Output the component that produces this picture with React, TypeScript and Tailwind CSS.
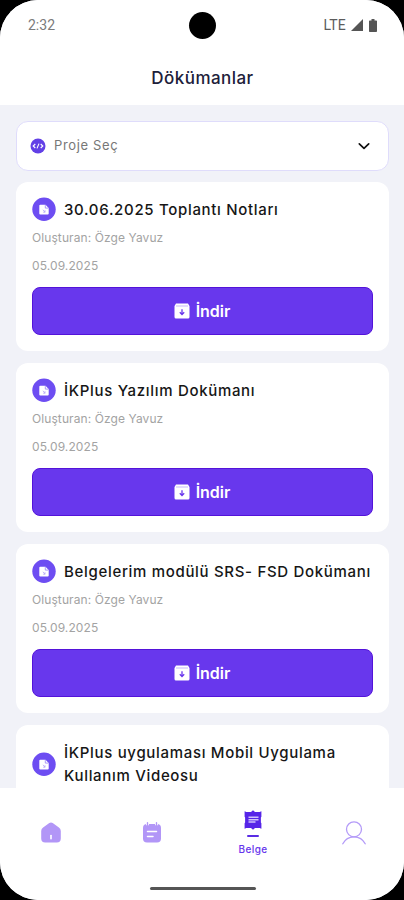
const documents = [
  { id: 1, title: '30.06.2025 Toplantı Notları', author: 'Özge Yavuz', date: '05.09.2025' },
  { id: 2, title: 'İKPlus Yazılım Dokümanı', author: 'Özge Yavuz', date: '05.09.2025' },
  { id: 3, title: 'Belgelerim modülü SRS- FSD Dokümanı', author: 'Özge Yavuz', date: '05.09.2025' },
  { id: 4, title: 'İKPlus uygulaması Mobil Uygulama Kullanım Videosu' },
]

type Doc = { id: number; title: string; author?: string; date?: string }

function StatusBar() {
  return (
    <div className="relative flex h-[50px] items-center justify-between pl-[28px] pr-[27px] font-[Roboto,sans-serif]">
      <span className="text-[14px] text-[#7b7b7b]">2:32</span>
      <div className="absolute left-[189px] top-[12px] size-[27px] rounded-full bg-black" />
      <div className="flex items-center">
        <span className="text-[14px] tracking-[0.2px] text-[#5c5c5c]">LTE</span>
        <svg className="ml-[5px]" width="12" height="12" viewBox="0 0 12 12" fill="#555">
          <path d="M12 0v12H0z" />
        </svg>
        <svg className="ml-[6px]" width="8" height="13" viewBox="0 0 8 13" fill="#555">
          <path d="M2.5 0h3v1.4H7c.6 0 1 .4 1 1V12c0 .6-.4 1-1 1H1c-.6 0-1-.4-1-1V2.4c0-.6.4-1 1-1h1.5z" />
        </svg>
      </div>
    </div>
  )
}

function DocIcon() {
  return (
    <svg className="shrink-0" width="24" height="24" viewBox="0 0 24 24" fill="none">
      <circle cx="12" cy="12.3" r="11.7" fill="#6d4df2" />
      <path d="M8.300 7.700h5.200l3.200 3.200v5.600a1 1 0 0 1-1 1H8.300a1 1 0 0 1-1-1V8.700a1 1 0 0 1 1-1z" fill="#fff" />
      <path d="M13.300 8.100v3h3" stroke="#8d73f5" strokeWidth=".7" />
      <path d="M11 12.800l2 2.400M13 13.300v1.900h-1.800" stroke="#b3a1f8" strokeWidth=".8" />
    </svg>
  )
}

function DownloadIcon() {
  return (
    <svg width="16" height="16" viewBox="0 0 16 16" fill="none">
      <path d="M2 .5h12l1.500 2.500V14a1.500 1.500 0 0 1-1.500 1.500H2A1.500 1.500 0 0 1 .5 14V3z" fill="#fff" />
      <path d="M2 3h12" stroke="#b9a5f8" strokeWidth=".8" />
      <path d="M8 6.200v5.200M5.800 9.300 8 11.600l2.200-2.300" stroke="#6835ec" strokeWidth="1.300" />
    </svg>
  )
}

function DocCard({ doc }: { doc: Doc }) {
  return (
    <article className="h-[169.15px] shrink-0 rounded-[12px] bg-white px-4 pt-[15px]">
      <div className="flex items-center gap-2">
        <DocIcon />
        <h2 className="-mr-3 min-h-[24px] pt-px text-[15px] font-medium leading-[23px] tracking-[0.68px] text-[#161616]">{doc.title}</h2>
      </div>
      {doc.author && (
        <>
          <p className="mt-[9px] text-[12px] leading-[16px] tracking-[0.09px] text-[#a3a3a3]">Oluşturan: {doc.author}</p>
          <p className="mt-[12px] text-[12px] leading-[16px] tracking-[0.09px] text-[#a3a3a3]">{doc.date}</p>
          <button className="mt-[13px] flex h-[48px] w-full items-center justify-center gap-[6px] rounded-[8px] border border-[#5313d9] bg-[#6837ed] pr-px text-[16px] font-semibold text-white">
            <DownloadIcon />
            İndir
          </button>
        </>
      )}
    </article>
  )
}

function BottomNav() {
  return (
    <nav className="relative grid h-[112px] shrink-0 grid-cols-4 bg-white">
      <div className="flex justify-center pt-[34px]">
        <svg width="20" height="21" viewBox="0 0 20 21" fill="none">
          <path d="M8.300 1.100a3 3 0 0 1 3.400 0l6.200 4.400A4 4 0 0 1 19.800 9v7.500a4 4 0 0 1-4 4H4.200a4 4 0 0 1-4-4V9a4 4 0 0 1 1.900-3.500z" fill="#b296f7" />
          <path d="M10 13.500v3.300" stroke="#fff" strokeWidth="1.600" strokeLinecap="round" />
        </svg>
      </div>
      <div className="flex justify-center pt-[34px]">
        <svg width="20" height="21" viewBox="0 0 20 21" fill="none">
          <rect x="1" y="2" width="18" height="18.500" rx="4" fill="#b296f7" />
          <path d="M5.500 1v2.300M14.500 1v2.300" stroke="#fff" strokeWidth="3" />
          <path d="M5.500.8v2.500M14.500.8v2.500" stroke="#b296f7" strokeWidth="1.400" strokeLinecap="round" />
          <path d="M5.500 9.500h9M5.500 14.500h5.500" stroke="#fff" strokeWidth="1.500" strokeLinecap="round" />
        </svg>
      </div>
      <div className="flex flex-col items-center pt-[22px]">
        <svg width="18" height="20" viewBox="0 0 18 20" fill="none">
          <path d="M.6 1.200 2.400 1.900H7L9 .2l2 1.700h4.600l1.800-.7v5.600l-.5.800v4.800l.5.800v5.600l-1.800-.7H11l-2 1.700-2-1.700H2.400l-1.800.7v-5.600l.5-.8V7.600l-.5-.8z" fill="#5625e8" />
          <path d="M4.500 7.300h10M4.500 9.700h10M4.500 12.100h7" stroke="#d0c2fb" strokeWidth="1.500" />
        </svg>
        <div className="mt-[5px] h-[2px] w-[12px] rounded-full bg-[#5a2ce4]" />
        <span className="ml-px mt-[5px] text-[10px] font-medium leading-[14px] tracking-[0.4px] text-[#6534ec]">Belge</span>
      </div>
      <div className="flex justify-center pt-[33px]">
        <svg className="ml-px" width="24" height="24" viewBox="0 0 24 24" fill="none" stroke="#b49bf8" strokeWidth="1.300" strokeLinecap="round">
          <circle cx="12" cy="8.300" r="7.500" />
          <path d="M.8 22.800C3 18.400 7 15.800 12 15.800s9 2.600 11.200 7" />
        </svg>
      </div>
      <div className="absolute bottom-[10px] left-[150px] h-[3px] w-[106px] rounded-full bg-[#555]" />
    </nav>
  )
}

export default function App() {
  return (
    <div className="h-[900px] w-[404px] bg-black">
      <div className="flex h-full flex-col overflow-hidden rounded-[38px] bg-[#f1f2f8] font-[Inter,sans-serif]">
        <header className="h-[105px] shrink-0 bg-white">
          <StatusBar />
          <h1 className="mt-[16px] pl-px text-center text-[17px] font-medium leading-[24px] tracking-[0.45px] text-[#20203a]">Dökümanlar</h1>
        </header>
        <main className="flex min-h-0 flex-1 flex-col overflow-hidden pl-4 pr-[15px] pt-4">
          <button className="flex h-[50px] w-full shrink-0 items-center rounded-[12px] border border-[#dfdcfb] bg-white pl-[13px] pr-[17px]">
            <svg width="16" height="16" viewBox="0 0 16 16" fill="none">
              <circle cx="8" cy="8" r="7.500" fill="#6240e6" />
              <path d="M5.300 6 3.200 8l2.100 2M10.700 6l2.100 2-2.100 2M9 5.600 7 10.400" stroke="#fff" strokeWidth="1.100" />
            </svg>
            <span className="ml-[8px] text-[13px] tracking-[0.65px] text-[#777]">Proje Seç</span>
            <svg className="ml-auto" width="14" height="14" viewBox="0 0 14 14" fill="none" stroke="#111" strokeWidth="1.700" strokeLinecap="round" strokeLinejoin="round">
              <path d="m2.300 4.800 4.700 4.500 4.700-4.500" />
            </svg>
          </button>
          <div className="mt-[11px] flex flex-col gap-3">
            {documents.map(doc => <DocCard key={doc.id} doc={doc} />)}
          </div>
        </main>
        <BottomNav />
      </div>
    </div>
  )
}
